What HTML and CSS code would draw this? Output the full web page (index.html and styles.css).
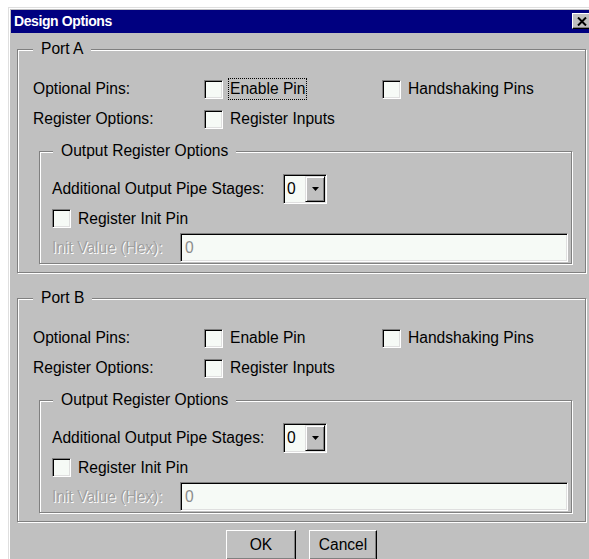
FILE: index.html
```html
<!DOCTYPE html>
<html lang="en">
<head>
<meta charset="utf-8">
<title>Design Options</title>
<link rel="stylesheet" href="styles.css">
</head>
<body>
<div class="dialog">
  <div class="titlebar">
    <span class="title">Design Options</span>
    <span class="close-btn" aria-label="Close">
      <svg width="10" height="9" viewBox="0 0 10 9"><path d="M1 0.5 L9 8.5 M9 0.5 L1 8.5" stroke="#000" stroke-width="2"/></svg>
    </span>
  </div>

  <div class="content">
    <section class="group port">
      <div class="caption">Port A</div>
      <div class="opt-rows">
        <div class="opt-row">
          <span class="label">Optional Pins:</span>
          <label class="check"><span class="box"></span><span class="text focus">Enable Pin</span></label>
          <label class="check"><span class="box"></span><span class="text">Handshaking Pins</span></label>
        </div>
        <div class="opt-row">
          <span class="label">Register Options:</span>
          <label class="check"><span class="box"></span><span class="text">Register Inputs</span></label>
        </div>
      </div>
      <section class="group sub">
        <div class="caption">Output Register Options</div>
        <div class="sub-rows">
          <div class="stage-row">
            <span class="label">Additional Output Pipe Stages:</span>
            <div class="combo">
              <span class="combo-value">0</span>
              <span class="combo-arrow"><svg width="7" height="4" viewBox="0 0 7 4"><polygon points="0,0 7,0 3.5,4" fill="#000"/></svg></span>
            </div>
          </div>
          <div class="init-row">
            <label class="check"><span class="box"></span><span class="text">Register Init Pin</span></label>
          </div>
          <div class="value-row">
            <span class="label disabled">Init Value (Hex):</span>
            <div class="field">0</div>
          </div>
        </div>
      </section>
    </section>

    <section class="group port port-b">
      <div class="caption">Port B</div>
      <div class="opt-rows">
        <div class="opt-row">
          <span class="label">Optional Pins:</span>
          <label class="check"><span class="box"></span><span class="text">Enable Pin</span></label>
          <label class="check"><span class="box"></span><span class="text">Handshaking Pins</span></label>
        </div>
        <div class="opt-row">
          <span class="label">Register Options:</span>
          <label class="check"><span class="box"></span><span class="text">Register Inputs</span></label>
        </div>
      </div>
      <section class="group sub">
        <div class="caption">Output Register Options</div>
        <div class="sub-rows">
          <div class="stage-row">
            <span class="label">Additional Output Pipe Stages:</span>
            <div class="combo">
              <span class="combo-value">0</span>
              <span class="combo-arrow"><svg width="7" height="4" viewBox="0 0 7 4"><polygon points="0,0 7,0 3.5,4" fill="#000"/></svg></span>
            </div>
          </div>
          <div class="init-row">
            <label class="check"><span class="box"></span><span class="text">Register Init Pin</span></label>
          </div>
          <div class="value-row">
            <span class="label disabled">Init Value (Hex):</span>
            <div class="field">0</div>
          </div>
        </div>
      </section>
    </section>

    <div class="actions">
      <button class="btn btn-ok" type="button">OK</button>
      <button class="btn btn-cancel" type="button">Cancel</button>
    </div>
  </div>
</div>
</body>
</html>
```

FILE: styles.css
```css
html, body {
  margin: 0;
  padding: 0;
}

body {
  width: 589px;
  height: 559px;
  overflow: hidden;
  background: #fff;
  font-family: "Liberation Sans", Arial, sans-serif;
  font-size: 15.6px;
  color: #000;
}

/* Window frame */
.dialog {
  box-sizing: border-box;
  width: 590px;
  margin: 7px 0 0 8px;
  padding: 2px 2px 40px 2px;
  background: #c0c0c0;
  border: 1px solid;
  border-color: #dfdfdf #000 #000 #dfdfdf;
  box-shadow: inset 1px 1px 0 #fff, inset -1px -1px 0 #808080;
}

.titlebar {
  display: flex;
  justify-content: space-between;
  align-items: flex-start;
  height: 23px;
  padding: 0 4px 0 3px;
  background: #000080;
}

.title {
  color: #fff;
  font-weight: bold;
  font-size: 14px;
  letter-spacing: -0.4px;
  line-height: 23px;
}

.close-btn {
  box-sizing: border-box;
  display: flex;
  align-items: center;
  justify-content: center;
  width: 19px;
  height: 16px;
  margin-top: 3px;
  background: #c0c0c0;
  border: 1px solid;
  border-color: #fff #000 #000 #fff;
  box-shadow: inset -1px -1px 0 #808080;
}

.content {
  padding: 16px 9px 0 6px;
}

/* Etched group boxes */
.group {
  border: 1px solid #808080;
  box-shadow: 1px 1px 0 #fff, inset 1px 1px 0 #fff;
}

.caption {
  width: fit-content;
  line-height: 20px;
  padding: 0 8px;
  margin: -11px 0 0 15px;
  background: #c0c0c0;
}

.port-b {
  margin-top: 25px;
}

.opt-rows {
  padding: 15px 0 0 15px;
}

.opt-row {
  display: grid;
  grid-template-columns: 171px 178px auto;
  align-items: center;
  height: 30px;
}

.sub {
  margin: 17px 13px 8px 21px;
}

.sub .caption {
  margin-left: 13px;
}

.sub-rows {
  padding: 13px 3px 1px 12px;
}

.stage-row {
  display: grid;
  grid-template-columns: 231px auto;
  align-items: center;
  height: 30px;
}

.init-row {
  display: flex;
  align-items: center;
  height: 29px;
}

.value-row {
  display: grid;
  grid-template-columns: 128px 1fr;
  align-items: center;
  height: 29px;
}

/* Check boxes */
.check {
  display: flex;
  align-items: center;
  gap: 5px;
}

.box {
  box-sizing: border-box;
  width: 19px;
  height: 19px;
  background: #f6faf6;
  border: 1px solid;
  border-color: #808080 #fff #fff #808080;
  box-shadow: inset 1px 1px 0 #000, inset -1px -1px 0 #dfdfdf;
}

.text {
  border: 1px dotted transparent;
  padding: 0 1px;
  line-height: 20px;
}

.text.focus {
  border-color: #000;
}

.label {
  line-height: 20px;
  white-space: nowrap;
}

.label.disabled {
  color: #a0a0a0;
  text-shadow: 1px 1px 0 #fff;
}

/* Combo box */
.combo {
  box-sizing: border-box;
  display: flex;
  width: 44px;
  height: 30px;
  padding: 1px;
  border: 1px solid;
  border-color: #808080 #fff #fff #808080;
  box-shadow: inset 1px 1px 0 #000, inset -1px -1px 0 #dfdfdf;
}

.combo-value {
  flex: 1;
  background: #f6faf6;
  padding-left: 2px;
  line-height: 26px;
}

.combo-arrow {
  box-sizing: border-box;
  display: flex;
  align-items: center;
  justify-content: center;
  width: 20px;
  background: #c0c0c0;
  border: 1px solid;
  border-color: #dfdfdf #000 #000 #dfdfdf;
  box-shadow: inset 1px 1px 0 #fff, inset -1px -1px 0 #808080;
}

/* Text field */
.field {
  box-sizing: border-box;
  height: 29px;
  padding-left: 4px;
  line-height: 27px;
  color: #8c8c8c;
  background: #f6faf6;
  border: 1px solid;
  border-color: #808080 #fff #fff #808080;
  box-shadow: inset 1px 1px 0 #000, inset -1px -1px 0 #dfdfdf;
}

/* Buttons */
.actions {
  display: flex;
  justify-content: center;
  gap: 13px;
  margin-top: 8px;
}

.btn {
  appearance: none;
  box-sizing: border-box;
  height: 30px;
  margin: 0;
  padding: 0;
  font: inherit;
  color: #000;
  line-height: 28px;
  background: #c0c0c0;
  border: 1px solid;
  border-color: #fff #000 #000 #fff;
  box-shadow: inset -1px -1px 0 #808080;
}

.btn-ok {
  width: 70px;
}

.btn-cancel {
  width: 68px;
}
```
